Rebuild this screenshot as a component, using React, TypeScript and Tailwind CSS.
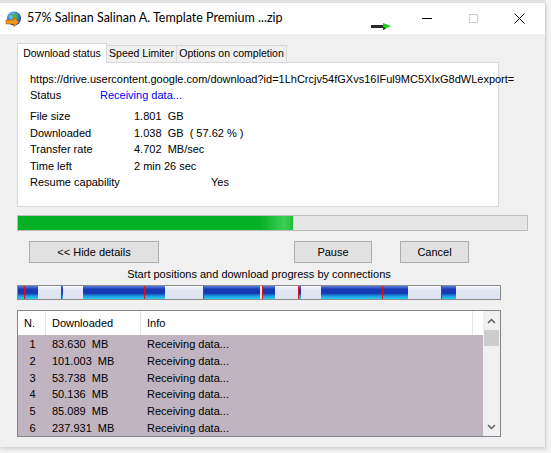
import React from "react";

const segs: { w: number; blue: boolean; red?: boolean }[] = [
  { w: 6, blue: true },
  { w: 14, blue: true, red: true },
  { w: 23, blue: false },
  { w: 2, blue: true, red: true },
  { w: 20, blue: false },
  { w: 61, blue: true },
  { w: 21, blue: true, red: true },
  { w: 38, blue: false },
  { w: 57, blue: true, red: true },
  { w: 2, blue: false },
  { w: 13, blue: true, red: true },
  { w: 23, blue: false },
  { w: 3, blue: true, red: true },
  { w: 20, blue: false },
  { w: 61, blue: true },
  { w: 26, blue: true, red: true },
  { w: 33, blue: false },
  { w: 15, blue: true, red: true },
];

const rows = [
  ["1", "83.630  MB"],
  ["2", "101.003  MB"],
  ["3", "53.738  MB"],
  ["4", "50.136  MB"],
  ["5", "85.089  MB"],
  ["6", "237.931  MB"],
];

const info = [
  ["File size", "1.801  GB"],
  ["Downloaded", "1.038  GB  ( 57.62 % )"],
  ["Transfer rate", "4.702  MB/sec"],
  ["Time left", "2 min 26 sec"],
];

const IdmIcon = () => (
  <svg width="17" height="16" viewBox="0 0 17 16">
    <defs>
      <radialGradient id="g" cx="40%" cy="35%" r="65%">
        <stop offset="0%" stopColor="#9fd8ff" />
        <stop offset="60%" stopColor="#2a7fd4" />
        <stop offset="100%" stopColor="#10449a" />
      </radialGradient>
    </defs>
    <circle cx="9" cy="7.5" r="7" fill="url(#g)" />
    <path d="M5 3 Q8 5 7 8 Q9 10 12 9 Q14 6 12 3" fill="#4caf3a" opacity="0.85" />
    <path d="M1 9 L9 9 L9 6.5 L14 11 L9 15.5 L9 13 L1 13 Z" fill="#f39a1e" stroke="#b35a00" strokeWidth="0.6" />
  </svg>
);

const lightBg = "bg-[linear-gradient(180deg,#f7f9fd_0%,#e0e6f2_30%,#dce2ef_100%)]";

export default function App() {
  return (
    <div className="w-[551px] h-[453px] bg-[#f4f4f4] overflow-hidden text-black" style={{ fontFamily: '"Liberation Sans", Arial, sans-serif' }}>
      <div className="w-[546px] h-[3px] bg-[#e4e4e4]" />
      <div className="w-[546px] h-[444px] bg-[#f0f0f0] border-r border-[#d0d0d0] shadow-[0_2px_4px_rgba(0,0,0,0.15)] flex flex-col">
        {/* title bar */}
        <div className="h-[31px] bg-white flex items-center relative">
          <div className="ml-[5px] mt-[1px]">
            <IdmIcon />
          </div>
          <span className="ml-[5px] text-[12.5px] text-black whitespace-nowrap" style={{ fontFamily: 'Lato, "Noto Sans", sans-serif' }}>
            57% Salinan Salinan A. Template Premium ...zip
          </span>
          <div className="absolute left-[371px] top-[20px] flex items-center">
            <div className="w-[13px] h-[3px] bg-[#2a2a2a]" />
            <svg width="8" height="7" viewBox="0 0 8 7" className="-ml-[1px]">
              <path d="M0 0 L8 3 L0 7 Z" fill="#16d516" />
              <path d="M0 4 L0 7 L3 5.5 Z" fill="#1b3b1b" />
            </svg>
          </div>
          <div className="ml-auto flex items-center h-full">
            <div className="w-[46px] flex justify-center">
              <div className="w-[10px] h-[1px] bg-black" />
            </div>
            <div className="w-[46px] flex justify-center">
              <div className="w-[9px] h-[9px] border border-[#cccccc]" />
            </div>
            <div className="w-[46px] flex justify-center mr-[3px]">
              <svg width="11" height="11" viewBox="0 0 11 11">
                <path d="M0.5 0.5 L10.5 10.5 M10.5 0.5 L0.5 10.5" stroke="#000" strokeWidth="1" />
              </svg>
            </div>
          </div>
        </div>

        <div className="pl-[17px] pt-[8px] flex flex-col">
          {/* tabs */}
          <div className="flex items-end h-[20px] text-[10.5px] whitespace-nowrap">
            <div className="h-[20px] w-[90px] bg-white border border-b-0 border-[#d9d9d9] flex items-center justify-center relative z-10 -mb-[1px]">
              Download status
            </div>
            <div className="h-[17px] w-[70px] bg-[#f0f0f0] border border-l-0 border-b-0 border-[#d9d9d9] flex items-center justify-center">
              Speed Limiter
            </div>
            <div className="h-[17px] w-[110px] bg-[#f0f0f0] border border-l-0 border-b-0 border-[#d9d9d9] flex items-center justify-center">
              Options on completion
            </div>
          </div>
          {/* panel */}
          <div className="w-[482px] h-[145px] bg-white border border-[#d9d9d9] pl-[12px] pt-[8px] text-[11px]">
            <div className="h-[16px] leading-[16px] whitespace-nowrap">
              https://drive.usercontent.google.com/download?id=1LhCrcjv54fGXvs16IFul9MC5XIxG8dWLexport=
            </div>
            <div className="h-[17px] leading-[17px] flex">
              <span className="w-[70px]">Status</span>
              <span className="text-[#0000ff]">Receiving data...</span>
            </div>
            <div className="mt-[4px]">
              {info.map(([k, v]) => (
                <div key={k} className="h-[16.6px] leading-[16.6px] flex whitespace-pre">
                  <span className="w-[104px]">{k}</span>
                  <span>{v}</span>
                </div>
              ))}
              <div className="h-[16.6px] leading-[16.6px] flex">
                <span className="w-[181px]">Resume capability</span>
                <span>Yes</span>
              </div>
            </div>
          </div>

          {/* progress */}
          <div className="mt-[8px] w-[511px] h-[16px] bg-[#e6e6e6] border border-[#bcbcbc] flex">
            <div className="w-[275px] h-full bg-[linear-gradient(90deg,#06b025_0%,#06b025_88%,#3ccf56_97%,#1fbc3a_100%)]" />
          </div>

          {/* buttons */}
          <div className="mt-[10px] flex text-[11px] h-[22px]">
            <button className="ml-[12px] w-[130px] h-[22px] bg-[#e1e1e1] border border-[#adadad]">
              &lt;&lt; Hide details
            </button>
            <button className="ml-[135px] w-[78px] h-[22px] bg-[#e1e1e1] border border-[#adadad]">Pause</button>
            <button className="ml-[28px] w-[69px] h-[22px] bg-[#e1e1e1] border border-[#adadad]">Cancel</button>
          </div>

          <div className="w-[484px] text-center text-[11px] h-[17px] leading-[17px] mt-[3px]">
            Start positions and download progress by connections
          </div>

          {/* connections bar */}
          <div className="mt-[2px] w-[484px] h-[15px] border border-[#8a8a8a] flex overflow-hidden">
            {segs.map((s, i) => (
              <div
                key={i}
                className={
                  (s.blue
                    ? "bg-[linear-gradient(180deg,#5a7ce0_0%,#1a3bb5_25%,#1436b0_55%,#1e9ae0_78%,#22d0f4_100%)] "
                    : lightBg + " ") +
                  (s.red ? "border-l border-[#e01010] " : "") +
                  "h-full shrink-0"
                }
                style={{ width: s.w }}
              />
            ))}
            <div className={"flex-1 h-full " + lightBg} />
          </div>

          {/* table */}
          <div className="mt-[10px] w-[484px] h-[127px] border border-[#828790] bg-white flex text-[11px]">
            <div className="flex-1 flex flex-col">
              <div className="h-[24px] flex bg-white items-center">
                <div className="w-[28px] h-full pl-[6px] flex items-center border-r border-[#e5e5e5]">N.</div>
                <div className="w-[95px] h-full pl-[6px] flex items-center border-r border-[#e5e5e5]">Downloaded</div>
                <div className="w-[332px] h-full pl-[6px] flex items-center border-r border-[#e5e5e5]">Info</div>
                <div className="flex-1" />
              </div>
              <div className="flex-1 bg-[#bfb4bf] pt-[1px] overflow-hidden">
                {rows.map(([n, d]) => (
                  <div key={n} className="h-[16.8px] leading-[16.8px] flex whitespace-pre">
                    <span className="w-[28px] text-center pl-[1px]">{n}</span>
                    <span className="w-[95px] pl-[6px]">{d}</span>
                    <span className="pl-[6px]">Receiving data...</span>
                  </div>
                ))}
              </div>
            </div>
            <div className="w-[17px] bg-[#f0f0f0] flex flex-col items-center">
              <svg width="9" height="6" viewBox="0 0 9 6" className="mt-[7px]">
                <path d="M1 5 L4.5 1.5 L8 5" stroke="#606060" strokeWidth="1.5" fill="none" />
              </svg>
              <div className="mt-[6px] w-[15px] h-[16px] bg-[#cdcdcd]" />
              <svg width="9" height="6" viewBox="0 0 9 6" className="mt-auto mb-[6px]">
                <path d="M1 1 L4.5 4.5 L8 1" stroke="#606060" strokeWidth="1.5" fill="none" />
              </svg>
            </div>
          </div>
        </div>
      </div>
    </div>
  );
}
